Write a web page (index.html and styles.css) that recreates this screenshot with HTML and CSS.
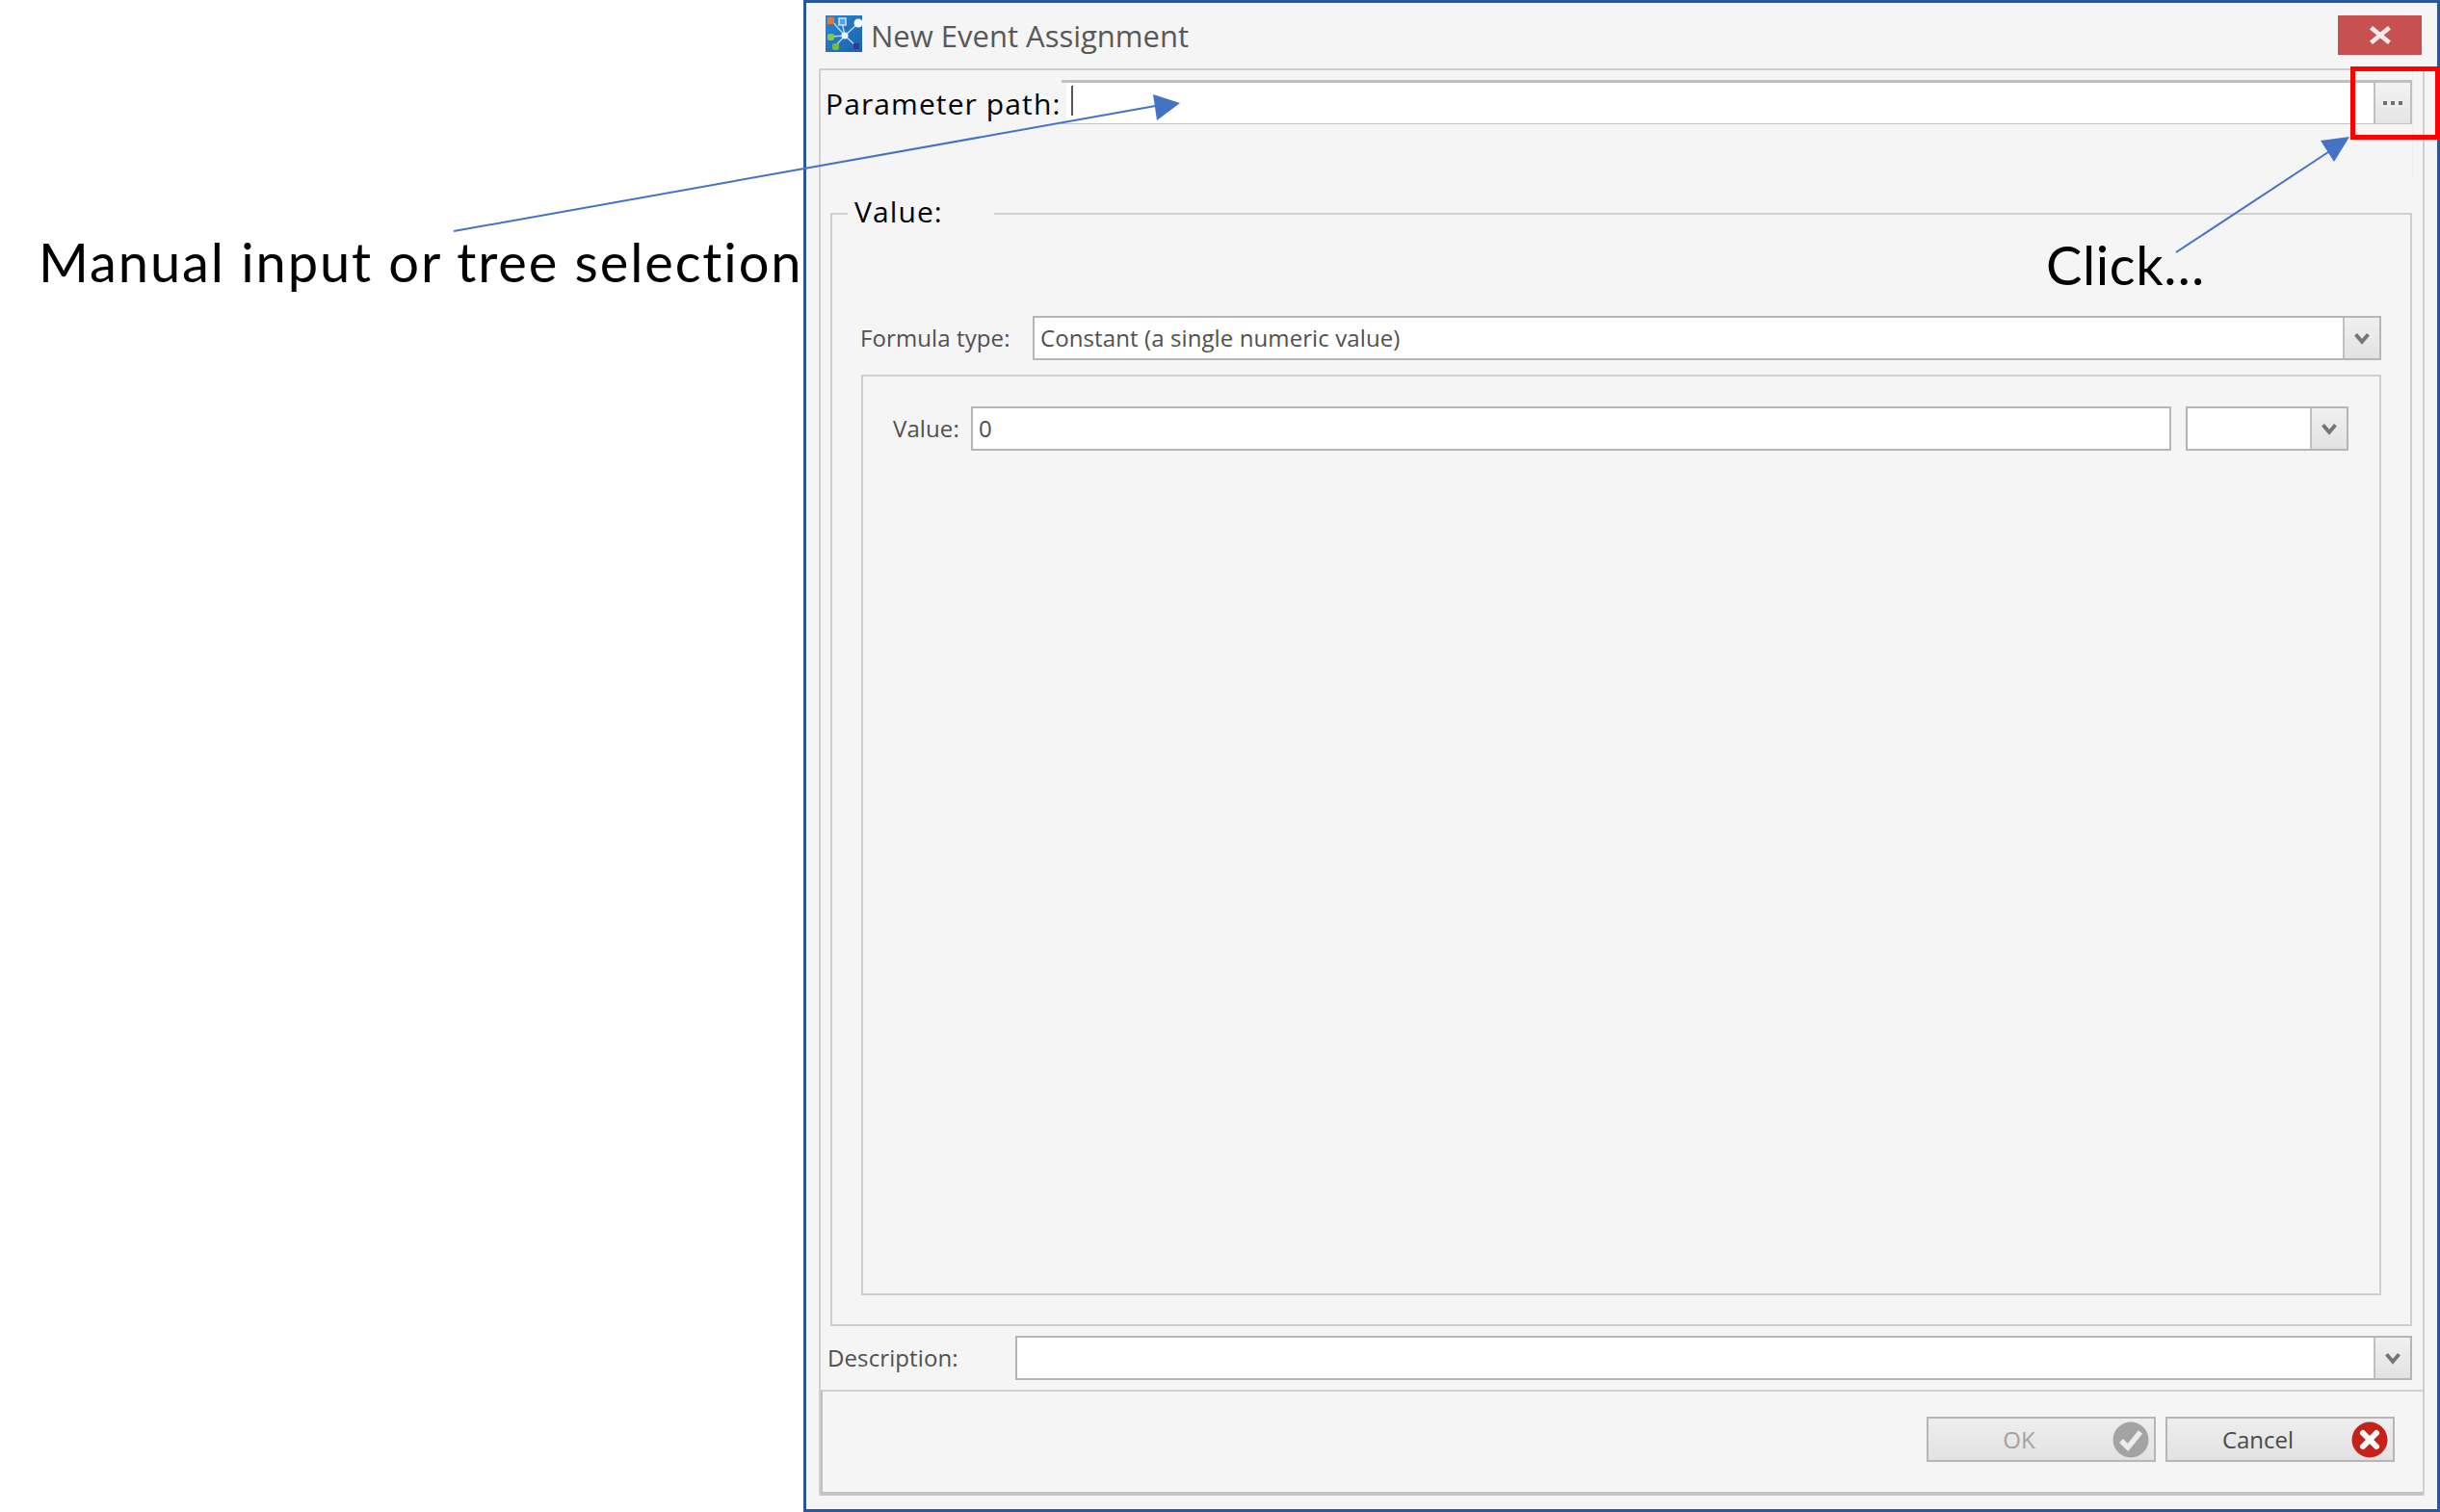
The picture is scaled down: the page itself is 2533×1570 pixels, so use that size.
FILE: index.html
```html
<!DOCTYPE html>
<html lang="en">
<head>
<meta charset="utf-8">
<title>New Event Assignment</title>
<link rel="stylesheet" href="styles.css">
</head>
<body>
<main class="window">
  <header class="titlebar">
    <svg class="app-icon" viewBox="0 0 38 38" aria-hidden="true">
      <defs>
        <linearGradient id="appbg" x1="0" y1="0" x2="1" y2="1">
          <stop offset="0" stop-color="#2a86cf"/>
          <stop offset="1" stop-color="#1a63ad"/>
        </linearGradient>
      </defs>
      <rect width="38" height="38" fill="url(#appbg)"/>
      <g stroke="#b9dcf3" stroke-width="1.4" fill="none">
        <path d="M20 21 L6 5"/><path d="M20 21 L17 7"/><path d="M20 21 L34 8"/>
        <path d="M20 21 L6 22"/><path d="M20 21 L10 32"/><path d="M20 21 L32 32"/>
      </g>
      <circle cx="20" cy="21" r="3.5" fill="#eef7fd"/>
      <rect x="2" y="2" width="7" height="7" fill="#e8762c"/>
      <rect x="14" y="3" width="7" height="7" fill="#5aa0d8" stroke="#c6e3f6" stroke-width="1.5"/>
      <circle cx="34" cy="8" r="4.5" fill="#f4fafd"/>
      <rect x="2" y="19" width="7" height="7" rx="2" fill="#8cc63f"/>
      <rect x="7" y="29" width="7" height="7" rx="2" fill="#7cbb35"/>
      <rect x="29" y="29" width="6" height="6" fill="#35359c"/>
    </svg>
    <h1 class="title">New Event Assignment</h1>
    <button class="close" type="button" aria-label="Close">
      <svg class="close-x" viewBox="0 0 20 16" aria-hidden="true"><path d="M2 1.5 L18 14.5 M18 1.5 L2 14.5"/></svg>
    </button>
  </header>

  <div class="frame">
    <div class="path-row">
      <label class="path-label">Parameter path:</label>
      <div class="path-box">
        <div class="path-field"><span class="caret"></span></div>
        <button class="more" type="button" aria-label="Browse"><span class="dot"></span><span class="dot"></span><span class="dot"></span></button>
      </div>
    </div>

    <fieldset class="group">
      <legend class="group-title">Value:</legend>
      <div class="form-row formula-row">
        <label class="ui-label formula-label">Formula type:</label>
        <div class="combo grow">
          <span class="combo-text">Constant (a single numeric value)</span>
          <span class="drop"><svg class="chev" viewBox="0 0 16 12" aria-hidden="true"><path d="M2 2 L8 9 L14 2"/></svg></span>
        </div>
      </div>
      <div class="inner-panel">
        <div class="form-row">
          <label class="ui-label value-label">Value:</label>
          <div class="text-field grow">0</div>
          <div class="combo unit">
            <span class="combo-text"></span>
            <span class="drop"><svg class="chev" viewBox="0 0 16 12" aria-hidden="true"><path d="M2 2 L8 9 L14 2"/></svg></span>
          </div>
        </div>
      </div>
    </fieldset>

    <div class="form-row desc-row">
      <label class="ui-label desc-label">Description:</label>
      <div class="combo grow">
        <span class="combo-text"></span>
        <span class="drop"><svg class="chev" viewBox="0 0 16 12" aria-hidden="true"><path d="M2 2 L8 9 L14 2"/></svg></span>
      </div>
    </div>

    <footer class="actions">
      <button class="btn btn-disabled" type="button">
        <span class="btn-text">OK</span>
        <svg class="btn-icon" viewBox="0 0 38 38" aria-hidden="true">
          <circle cx="19" cy="19" r="18.5" fill="#a3a3a3"/>
          <path d="M9 20 L16 27 L29 11" fill="none" stroke="#ececec" stroke-width="5.5"/>
        </svg>
      </button>
      <button class="btn" type="button">
        <span class="btn-text">Cancel</span>
        <svg class="btn-icon" viewBox="0 0 38 38" aria-hidden="true">
          <circle cx="19" cy="19" r="18.5" fill="#c5221c"/>
          <path d="M12 12 L26 26 M26 12 L12 26" fill="none" stroke="#fff" stroke-width="6" stroke-linecap="round"/>
        </svg>
      </button>
    </footer>
  </div>
</main>

<svg class="overlay" viewBox="0 0 2533 1570" aria-hidden="true">
  <path class="arrow-line" d="M471 240 L1205 109"/>
  <polygon class="arrow-head" points="1225,107 1197,98 1201,125"/>
  <path class="arrow-line" d="M2259 262 L2420 156"/>
  <polygon class="arrow-head" points="2439,142 2409,146 2423,168"/>
  <rect class="highlight" x="2442.5" y="71.5" width="88" height="71"/>
</svg>
<p class="note note-manual">Manual input or tree selection</p>
<p class="note note-click">Click…</p>
</body>
</html>
```

FILE: styles.css
```css
* { box-sizing: border-box; }
html, body { margin: 0; padding: 0; }
body {
  position: relative;
  width: 2533px;
  height: 1570px;
  overflow: hidden;
  background: #fff;
  font-family: "Open Sans", "Liberation Sans", sans-serif;
}

.window {
  display: flex;
  flex-direction: column;
  height: 1570px;
  margin-left: 834px;
  border: 3px solid #2b5797;
  background: #f5f5f5;
}

.titlebar {
  display: flex;
  flex: none;
  align-items: flex-start;
  height: 68px;
  padding: 13px 16px 0 20px;
}
.app-icon { flex: none; width: 38px; height: 38px; }
.title {
  flex: 1;
  margin: 0 0 0 9px;
  font-size: 31px;
  font-weight: 400;
  line-height: 42px;
  color: #585858;
}
.close {
  display: flex;
  align-items: center;
  justify-content: center;
  flex: none;
  width: 87px;
  height: 41px;
  padding: 0;
  border: 0;
  background: #c75050;
}
.close-x { width: 24px; height: 19px; }
.close-x path { fill: none; stroke: #f8eaea; stroke-width: 4; }

.frame {
  display: flex;
  flex: 1;
  flex-direction: column;
  min-height: 0;
  margin: 0 13px 14px;
  border: 2px solid #cfcfcf;
  border-bottom: 0;
}

.path-row {
  display: flex;
  flex: none;
  align-items: flex-start;
  height: 112px;
  margin-right: 10px;
  padding: 10px 0 0 5px;
  border-right: 1px solid #ededed;
}
.path-label {
  flex: none;
  width: 245px;
  font-size: 30px;
  letter-spacing: 1.1px;
  line-height: 40px;
  padding-top: 5px;
  color: #000;
  white-space: nowrap;
}
.path-box {
  display: flex;
  flex: 1;
  height: 46px;
  border-top: 3px solid #c0c0c0;
  border-bottom: 1px solid #c4c4c4;
}
.path-field {
  flex: 1;
  margin-left: 5px;
  padding: 3px 0 0 5px;
  background: #fff;
}
.caret { display: block; width: 2px; height: 31px; background: #555; }
.more {
  display: flex;
  align-items: center;
  justify-content: center;
  gap: 4px;
  flex: none;
  width: 40px;
  padding: 0;
  border: 0;
  border-left: 2px solid #c0c0c0;
  border-right: 2px solid #c0c0c0;
  background: linear-gradient(#f3f3f3, #e4e4e4);
}
.dot { width: 4px; height: 4px; background: #6e6e6e; }

.group {
  display: flex;
  flex: 1;
  flex-direction: column;
  min-height: 0;
  min-width: 0;
  margin: 17px 11px 0 10px;
  padding: 86px 30px 30px;
  border: 2px solid #cfcfcf;
}
.group-title {
  position: relative;
  top: -2px;
  width: 152px;
  margin-left: -14px;
  padding: 0 0 0 7px;
  font-size: 30px;
  letter-spacing: 1.1px;
  line-height: 40px;
  color: #000;
}

.form-row { display: flex; flex: none; height: 46px; }
.formula-row { margin-bottom: 15px; margin-left: -1px; }
.grow { flex: 1; min-width: 0; }

.ui-label {
  flex: none;
  font-size: 24px;
  letter-spacing: 0.1px;
  line-height: 46px;
  color: #505050;
}
.formula-label { width: 179px; }
.value-label { width: 81px; }
.desc-label { width: 195px; }

.combo {
  display: flex;
  height: 46px;
  border: 2px solid #b6b6b6;
  background: #fff;
}
.combo-text {
  flex: 1;
  padding-left: 6px;
  font-size: 24px;
  letter-spacing: 0.1px;
  line-height: 42px;
  color: #505050;
}
.drop {
  display: flex;
  align-items: center;
  justify-content: center;
  flex: none;
  width: 38px;
  border-left: 2px solid #c0c0c0;
  background: linear-gradient(#f0f0f0, #e2e2e2);
}
.chev { width: 18px; height: 13px; }
.chev path { fill: none; stroke: #757575; stroke-width: 3.5; }

.inner-panel {
  flex: 1;
  min-height: 0;
  padding: 31px 32px 0 31px;
  border: 2px solid #cfcfcf;
}
.text-field {
  height: 46px;
  padding-left: 6px;
  border: 2px solid #b6b6b6;
  background: #fff;
  font-size: 24px;
  line-height: 42px;
  color: #505050;
}
.unit { flex: none; width: 169px; margin-left: 15px; }

.desc-row { margin: 10px 11px 0 7px; }

.actions {
  display: flex;
  flex: none;
  justify-content: flex-end;
  gap: 10px;
  height: 110px;
  margin-top: 10px;
  padding: 26px 29px 0 0;
  border-top: 2px solid #cfcfcf;
  border-left: 2px solid #c0c0c0;
  border-bottom: 4px solid #c4c4c4;
}
.btn {
  display: flex;
  align-items: center;
  width: 238px;
  height: 47px;
  padding: 0 5px 0 0;
  border: 2px solid #b6b6b6;
  background: linear-gradient(#eeeeee, #e2e2e2);
  font-family: inherit;
}
.btn-text {
  flex: 1;
  padding-right: 3px;
  font-size: 24px;
  line-height: 42px;
  color: #4a4a4a;
}
.btn-disabled .btn-text { color: #a2a2a2; }
.btn-icon { flex: none; width: 38px; height: 38px; }

.overlay {
  position: absolute;
  top: 0;
  left: 0;
  width: 2533px;
  height: 1570px;
  pointer-events: none;
}
.arrow-line { fill: none; stroke: #4472c4; stroke-width: 2; }
.arrow-head { fill: #4472c4; }
.highlight { fill: none; stroke: #ff0000; stroke-width: 5; }

.note {
  position: absolute;
  margin: 0;
  font-family: "Lato", sans-serif;
  font-size: 56px;
  font-variant-ligatures: none;
  line-height: 60px;
  color: #000;
  white-space: nowrap;
}
.note-manual { left: 40px; top: 242px; letter-spacing: 1.9px; }
.note-click { left: 2124px; top: 245px; letter-spacing: 0.6px; }
```
